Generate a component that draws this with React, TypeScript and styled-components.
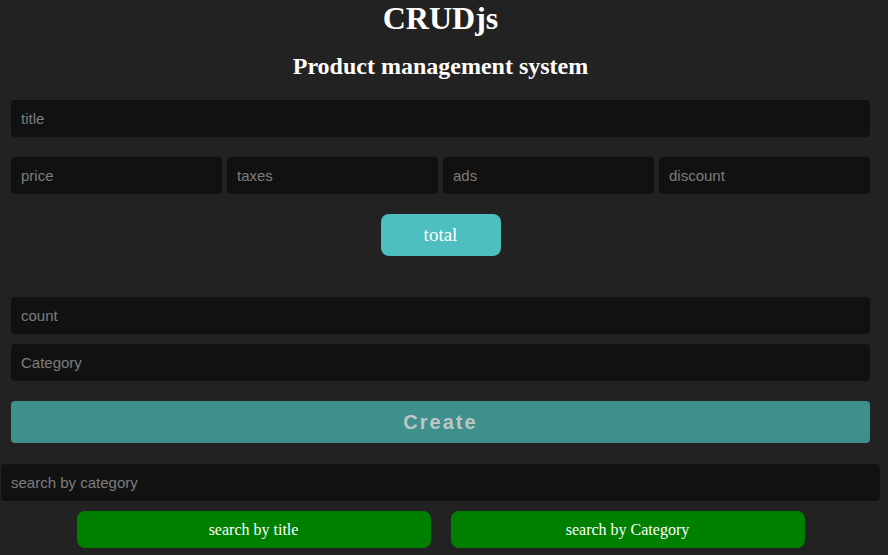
import React from "react";
import styled, { createGlobalStyle } from "styled-components";

const Global = createGlobalStyle`
  html, body { margin: 0; padding: 0; background: #222222; }
  body { font-family: "Liberation Serif", "Times New Roman", serif; color: #fff; }
`;

const Page = styled.div`
  width: 881px;
  box-sizing: border-box;
`;

const Header = styled.header`
  text-align: center;
`;

const Title = styled.h1`
  margin: 0;
  font-size: 32px;
  line-height: normal;
  font-weight: bold;
  color: #fff;
`;

const Subtitle = styled.h2`
  margin: 14px 0 0;
  font-size: 24px;
  line-height: 30px;
  font-weight: bold;
  color: #fff;
`;

const Form = styled.section`
  padding: 0 11px;
  display: flex;
  flex-direction: column;
`;

const Input = styled.input<{ $mt?: number }>`
  display: block;
  box-sizing: border-box;
  width: 100%;
  height: 37px;
  margin-top: ${(p) => p.$mt ?? 0}px;
  padding: 0 10px;
  border: none;
  outline: none;
  border-radius: 4px;
  background: #111111;
  color: #ddd;
  font-family: "Liberation Sans", Arial, sans-serif;
  font-size: 15px;
  &::placeholder { color: #7d7d7d; }
`;

const PriceRow = styled.div`
  margin-top: 20px;
  display: grid;
  grid-template-columns: repeat(4, 1fr);
  gap: 5px;
`;

const TotalWrap = styled.div`
  display: flex;
  justify-content: center;
  margin-top: 20px;
`;

const TotalButton = styled.button`
  width: 120px;
  height: 42px;
  border: none;
  border-radius: 8px;
  background: #4dbfc0;
  color: #fff;
  font-family: "Liberation Serif", "Times New Roman", serif;
  font-size: 19px;
`;

const CreateButton = styled.button`
  margin-top: 20px;
  width: 100%;
  height: 42px;
  border: none;
  border-radius: 4px;
  background: #3f8f8d;
  color: #bcc6c5;
  font-family: "Liberation Sans", Arial, sans-serif;
  font-size: 20px;
  font-weight: bold;
  letter-spacing: 2px;
`;

const Search = styled.section`
  margin-top: 21px;
  padding: 0 1px;
`;

const SearchButtons = styled.div`
  margin-top: 10px;
  display: flex;
  justify-content: center;
  gap: 20px;
`;

const GreenButton = styled.button`
  width: 354px;
  height: 37px;
  border: none;
  border-radius: 8px;
  background: #008000;
  color: #fff;
  font-family: "Liberation Serif", "Times New Roman", serif;
  font-size: 16px;
`;

export default function App() {
  return (
    <Page>
      <Global />
      <Header>
        <Title>CRUDjs</Title>
        <Subtitle>Product management system</Subtitle>
      </Header>
      <Form>
        <Input $mt={19} placeholder="title" />
        <PriceRow>
          <Input placeholder="price" />
          <Input placeholder="taxes" />
          <Input placeholder="ads" />
          <Input placeholder="discount" />
        </PriceRow>
        <TotalWrap>
          <TotalButton>total</TotalButton>
        </TotalWrap>
        <Input $mt={41} placeholder="count" />
        <Input $mt={10} placeholder="Category" />
        <CreateButton>Create</CreateButton>
      </Form>
      <Search>
        <Input placeholder="search by category" />
        <SearchButtons>
          <GreenButton>search by title</GreenButton>
          <GreenButton>search by Category</GreenButton>
        </SearchButtons>
      </Search>
    </Page>
  );
}
